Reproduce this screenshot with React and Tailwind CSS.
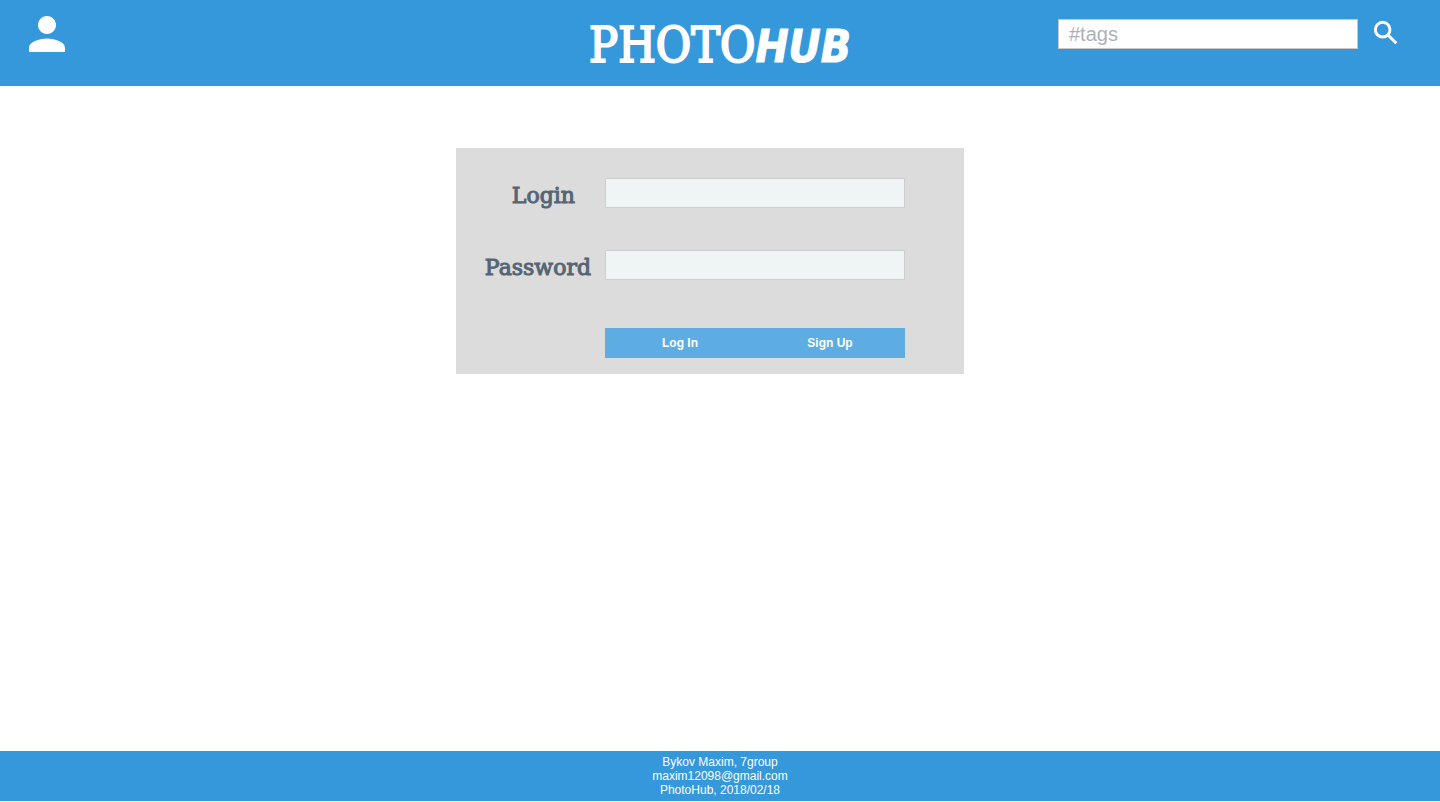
import { MdPerson } from "react-icons/md";

function SearchIcon() {
  return (
    <svg width="32" height="32" viewBox="0 0 24 24" fill="none" stroke="currentColor" strokeWidth="2.2" aria-hidden="true">
      <circle cx="9.5" cy="9.5" r="5.5" />
      <path d="M13.6 13.6 19.7 19.7" />
    </svg>
  );
}

function Header() {
  return (
    <header className="grid h-[86px] grid-cols-[1fr_auto_1fr] items-start bg-[#3498db] text-white">
      <div className="pt-[7px] pl-5">
        <a href="#account" aria-label="Account" className="inline-block">
          <MdPerson size={54} aria-hidden="true" />
        </a>
      </div>
      <a href="#home" aria-label="PhotoHub" className="flex items-baseline pt-[13px] leading-16">
        <span className="font-['DejaVu_Serif_Condensed','DejaVu_Serif',serif] text-[48px] [-webkit-text-stroke:2px_white]">PHOTO</span>
        <span className="font-['DejaVu_Sans_Condensed','DejaVu_Sans',sans-serif] text-[44px] font-bold italic [-webkit-text-stroke:1px_white]">HUB</span>
      </a>
      <form role="search" className="flex items-start justify-end gap-3 pr-[38px]" onSubmit={(e) => e.preventDefault()}>
        <input
          type="text"
          aria-label="Search tags"
          placeholder="#tags"
          className="mt-[19px] h-[30px] w-[300px] border border-[#c8c8c8] bg-white px-[10px] text-[20px] text-[#34495e] placeholder:text-[#afb0b8]"
        />
        <button type="submit" aria-label="Search" className="mt-[17px]">
          <SearchIcon />
        </button>
      </form>
    </header>
  );
}

function Field({ id, label, type, labelClass }) {
  return (
    <div className="flex h-[30px] items-center">
      <div className="flex w-[149px] justify-end">
        <label
          htmlFor={id}
          className={`${labelClass} pt-[5px] font-['DejaVu_Serif',serif] text-[22px] leading-[30px] text-[#556575] [-webkit-text-stroke:1px_#556575]`}
        >
          {label}
        </label>
      </div>
      <input
        id={id}
        type={type}
        className="h-[30px] w-[300px] border border-[#cecece] bg-[#eff5f5] px-[10px] text-[20px] text-[#34495e]"
      />
    </div>
  );
}

function LoginForm() {
  return (
    <form className="w-[508px] bg-[#dcdcdc] pt-[30px] pb-4" onSubmit={(e) => e.preventDefault()}>
      <div className="flex flex-col gap-[42px]">
        <Field id="login" label="Login" type="text" labelClass="pr-[30px]" />
        <Field id="password" label="Password" type="password" labelClass="pr-[14px]" />
      </div>
      <div className="mt-12 ml-[149px] grid w-[300px] grid-cols-2">
        <button type="submit" className="h-[30px] bg-[#5dade2] text-[12px] font-bold text-white">
          Log In
        </button>
        <button type="button" className="h-[30px] bg-[#5dade2] text-[12px] font-bold text-white">
          Sign Up
        </button>
      </div>
    </form>
  );
}

export default function App() {
  return (
    <div className="flex min-h-screen flex-col bg-white pb-px font-['Liberation_Sans',Arial,sans-serif]">
      <Header />
      <main className="flex flex-1 items-start justify-center pt-[62px] pr-5">
        <LoginForm />
      </main>
      <footer className="bg-[#3498db] py-1 text-center text-[12px] leading-[14px] text-white">
        <p>Bykov Maxim, 7group</p>
        <p>maxim12098@gmail.com</p>
        <p>PhotoHub, 2018/02/18</p>
      </footer>
    </div>
  );
}
